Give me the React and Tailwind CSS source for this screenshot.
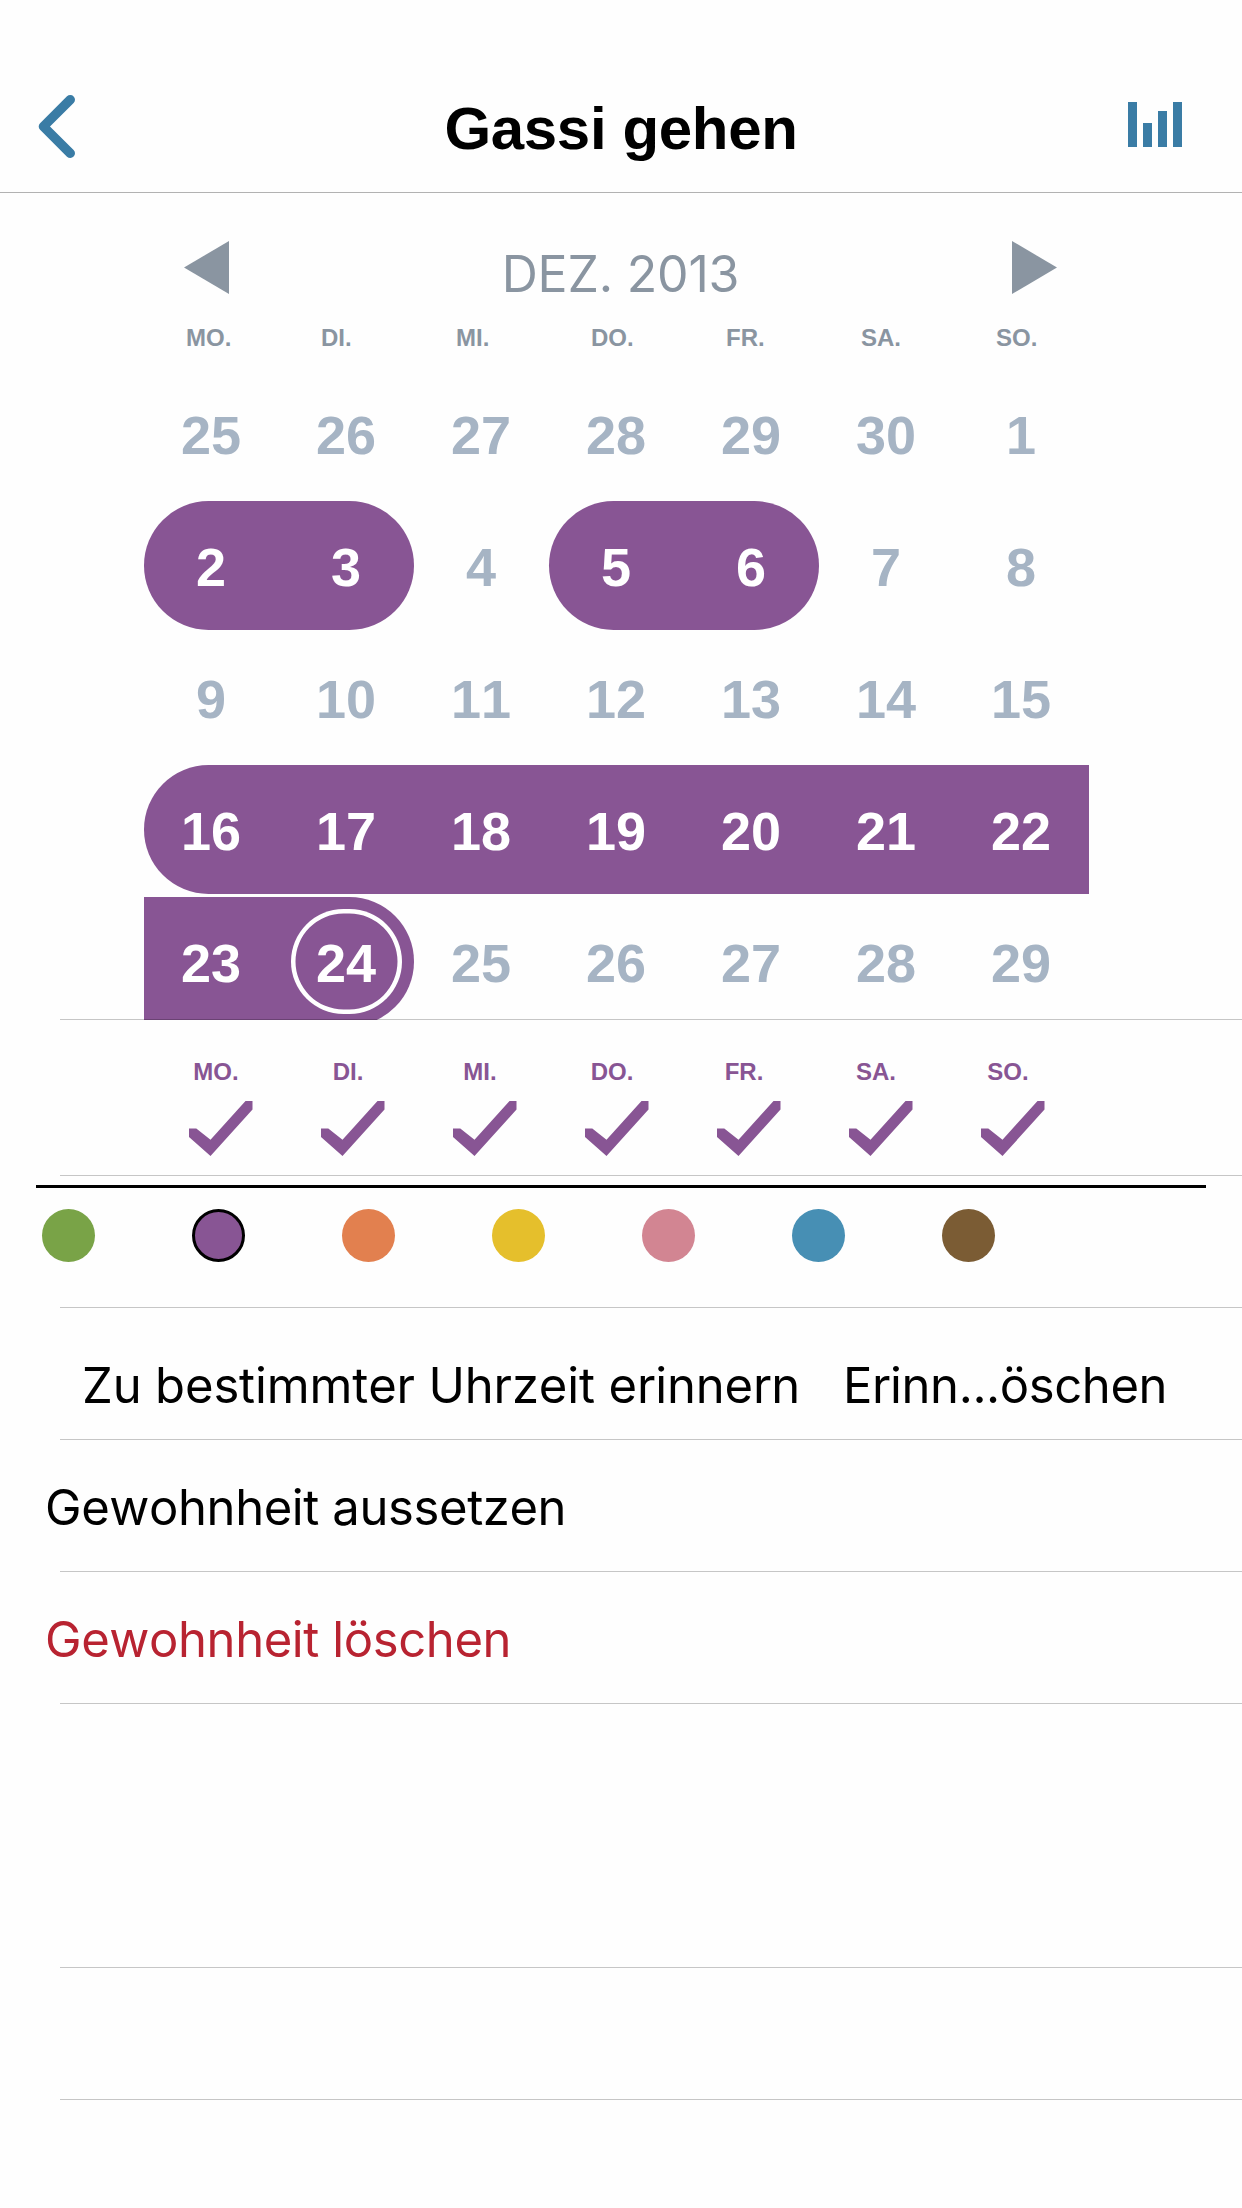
const WEEKDAYS = ['MO.', 'DI.', 'MI.', 'DO.', 'FR.', 'SA.', 'SO.'];

// kind: l = left cap, m = middle, r = right cap
const WEEKS = [
  [[25], [26], [27], [28], [29], [30], [1]],
  [[2, 'l'], [3, 'r'], [4], [5, 'l'], [6, 'r'], [7], [8]],
  [[9], [10], [11], [12], [13], [14], [15]],
  [[16, 'l'], [17, 'm'], [18, 'm'], [19, 'm'], [20, 'm'], [21, 'm'], [22, 'm']],
  [[23, 'm'], [24, 'r', true], [25], [26], [27], [28], [29]],
];

const CELL = {
  l: 'bg-[#885594] text-white rounded-l-[65px]',
  m: 'bg-[#885594] text-white',
  r: 'bg-[#885594] text-white rounded-r-[65px]',
};

const COLORS = [
  'bg-[#79a347]',
  'bg-[#885594] border-[3px] border-black',
  'bg-[#e2804f]',
  'bg-[#e5bf2c]',
  'bg-[#d28592]',
  'bg-[#478fb4]',
  'bg-[#7b5c34]',
];

const SANS = "font-['Inter',sans-serif]";

function Header() {
  return (
    <header className="flex h-[193px] items-start justify-between border-b border-[#b2b2b2] pt-[63px]">
      <div className="flex h-[130px] w-[240px] pl-[38px] pt-[31px]">
        <svg width="40" height="66" viewBox="0 0 40 66" fill="none" stroke="#3a7ca5" strokeWidth="9.4" strokeLinecap="round" strokeLinejoin="round">
          <path d="M32.3 5.7 L5.4 32.5 L32.3 59.3" />
        </svg>
      </div>
      <h1 className="text-[60px] font-bold leading-[132px] tracking-[-0.35px] text-black">Gassi gehen</h1>
      <div className="flex h-[130px] w-[240px] justify-end pr-[60px] pt-[39px]">
        <div className="flex h-[45px] items-end gap-[6px]">
          <i className="h-[45px] w-[9px] bg-[#3a7ca5]" />
          <i className="h-[24px] w-[9px] bg-[#3a7ca5]" />
          <i className="h-[36px] w-[9px] bg-[#3a7ca5]" />
          <i className="h-[45px] w-[9px] bg-[#3a7ca5]" />
        </div>
      </div>
    </header>
  );
}

function Calendar() {
  return (
    <section>
      <div className="flex h-[128px] justify-between pl-[184px] pr-[185px] pt-[48px] text-[#8a95a1]">
        <svg width="45" height="53" viewBox="0 0 45 53" fill="currentColor">
          <path d="M45 0 V53 L0 26.5 Z" />
        </svg>
        <div className="font-['Inter',sans-serif] text-[50px] leading-[67px] tracking-[-0.2px]">DEZ. 2013</div>
        <svg width="45" height="53" viewBox="0 0 45 53" fill="currentColor">
          <path d="M0 0 V53 L45 26.5 Z" />
        </svg>
      </div>
      <div className="grid h-[48px] w-[945px] grid-cols-7 ml-[186px] text-[24px] font-bold leading-[34px] text-[#8a95a1]">
        {WEEKDAYS.map((d) => <span key={d}>{d}</span>)}
      </div>
      <div className="ml-[144px] flex h-[651px] w-[945px] flex-col gap-[3px] overflow-hidden">
        {WEEKS.map((week, i) => (
          <div key={i} className="grid h-[129px] shrink-0 grid-cols-7">
            {week.map(([n, kind, today]) => (
              <div
                key={n}
                className={`relative h-[129px] pr-px text-center text-[54px] font-bold leading-[133px] ${kind ? CELL[kind] : 'text-[#a6b4c4]'}`}
              >
                {n}
                {today && <span className="absolute inset-[12px] rounded-[52.5px] shadow-[inset_0_0_0_4.5px_#ffffff]" />}
              </div>
            ))}
          </div>
        ))}
      </div>
    </section>
  );
}

function Check() {
  return (
    <svg width="64" height="55" viewBox="0 0 64 55" fill="#885594" className="ml-[10px] mt-[12px]">
      <path d="M0 27.4 H7.3 L21.5 38.8 L56.5 0 H63.5 V8.6 L21.5 55 L0 36 Z" />
    </svg>
  );
}

function Line({ className = '' }) {
  return <div className={`relative ml-[60px] h-px bg-black/[0.22] ${className}`} />;
}

export default function App() {
  return (
    <main className="flex h-[2208px] w-[1242px] flex-col overflow-hidden bg-[#fefefe] font-['Liberation_Sans',Arial,sans-serif] [font-kerning:none]">
      <Header />
      <Calendar />
      <Line className="-mt-px" />

      <div className="ml-[150px] grid h-[155px] w-[924px] grid-cols-7 pt-[37px] text-[#885594]">
        {WEEKDAYS.map((d) => (
          <div key={d} className="pl-[29px]">
            <div className="-ml-[29px] h-[32px] text-center text-[24px] font-bold leading-[30px]">{d}</div>
            <Check />
          </div>
        ))}
      </div>
      <Line />

      <div className="mx-[36px] mt-[9px] h-[3px] bg-black" />
      <div className="flex h-[119px] gap-[97px] pl-[42px] pt-[21px]">
        {COLORS.map((c) => <span key={c} className={`size-[53px] rounded-full ${c}`} />)}
      </div>
      <Line />

      <div className={`flex h-[131px] pl-[82px] pt-[12px] text-[49px] leading-[131px] text-black ${SANS}`}>
        <span className="w-[761px] tracking-[-0.15px]">Zu bestimmter Uhrzeit erinnern</span>
        <span className="tracking-[-0.4px]">Erinn...öschen</span>
      </div>
      <Line />
      <div className={`h-[131px] pl-[45px] pt-[2px] text-[49px] leading-[131px] tracking-[-0.4px] text-black ${SANS}`}>Gewohnheit aussetzen</div>
      <Line />
      <div className={`h-[131px] pl-[45px] pt-[2px] text-[49px] leading-[131px] tracking-[-0.4px] text-[#b82331] ${SANS}`}>Gewohnheit löschen</div>
      <Line />
      <Line className="mt-[263px]" />
      <Line className="mt-[131px]" />
    </main>
  );
}
